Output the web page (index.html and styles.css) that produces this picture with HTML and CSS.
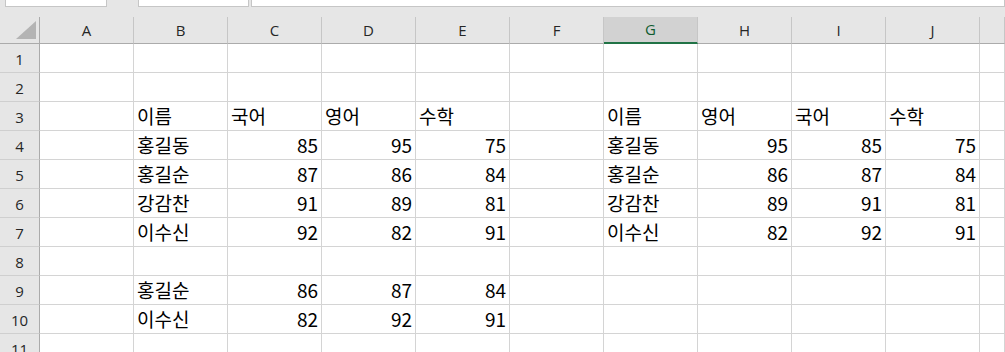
FILE: index.html
```html
<!DOCTYPE html>
<html>
<head>
    <meta charset="utf-8">
    <title>Sheet1</title>
    <link rel="stylesheet" href="styles.css">
</head>
<body>
    <div class="toolbar">
        <div class="box name-box"></div>
        <div class="box func-box"></div>
        <div class="box formula-box"></div>
    </div>

    <div id="sheet" class="sheet">
        <div class="corner">
            <svg width="20" height="18" viewBox="0 0 20 18"><polygon points="0,18 20,18 20,0" fill="#b4b4b4"/></svg>
        </div>
    </div>

    <script>
        const cols = ['A', 'B', 'C', 'D', 'E', 'F', 'G', 'H', 'I', 'J', ''];
        const selectedCol = 'G';

        // row number -> { column: value }
        const data = {
            3: { B: '이름', C: '국어', D: '영어', E: '수학', G: '이름', H: '영어', I: '국어', J: '수학' },
            4: { B: '홍길동', C: 85, D: 95, E: 75, G: '홍길동', H: 95, I: 85, J: 75 },
            5: { B: '홍길순', C: 87, D: 86, E: 84, G: '홍길순', H: 86, I: 87, J: 84 },
            6: { B: '강감찬', C: 91, D: 89, E: 81, G: '강감찬', H: 89, I: 91, J: 81 },
            7: { B: '이수신', C: 92, D: 82, E: 91, G: '이수신', H: 82, I: 92, J: 91 },
            9: { B: '홍길순', C: 86, D: 87, E: 84 },
            10: { B: '이수신', C: 82, D: 92, E: 91 }
        };

        const sheet = document.getElementById('sheet');

        function addCell(className, text) {
            const el = document.createElement('div');
            el.className = className;
            el.textContent = text;
            sheet.appendChild(el);
        }

        cols.forEach(function (c) {
            addCell(c === selectedCol ? 'col-head selected' : 'col-head', c);
        });

        for (let r = 1; r <= 11; r++) {
            addCell('row-head', r);
            const row = data[r] || {};
            cols.forEach(function (c) {
                const v = row[c];
                if (v === undefined) {
                    addCell('cell', '');
                } else if (typeof v === 'number') {
                    addCell('cell num', v);
                } else {
                    addCell('cell', v);
                }
            });
        }
    </script>
</body>
</html>
```

FILE: styles.css
```css
body {
    margin: 0;
    background-color: #ffffff;
    font-family: 'Noto Sans CJK KR', 'Noto Sans', sans-serif;
    overflow: hidden;
}

.toolbar {
    display: flex;
    height: 17px;
    background-color: #e6e6e6;
}

.box {
    height: 6px;
    background-color: #ffffff;
    border: 1px solid #c6c6c6;
    border-top: none;
}

.name-box {
    width: 100px;
    margin-left: 5px;
}

.func-box {
    width: 109px;
    margin-left: 31px;
}

.formula-box {
    flex: 1;
    margin-left: 2px;
}

.sheet {
    display: grid;
    grid-template-columns: 40px repeat(10, 94px) 1fr;
    grid-template-rows: 27px repeat(11, 29px);
}

.sheet > div {
    box-sizing: border-box;
}

.corner {
    background-color: #e6e6e6;
    border-right: 1px solid #ababab;
    border-bottom: 1px solid #ababab;
    display: flex;
    align-items: flex-end;
    justify-content: flex-end;
    padding: 0 3px 4px 0;
}

.corner svg {
    display: block;
}

.col-head {
    background-color: #e6e6e6;
    border-right: 1px solid #c6c6c6;
    border-bottom: 1px solid #ababab;
    color: #262626;
    font-family: 'Open Sans', sans-serif;
    font-size: 15px;
    line-height: 26px;
    text-align: center;
}

.col-head.selected {
    background-color: #d2d2d2;
    border-bottom: 2px solid #217346;
    color: #0f5c30;
    line-height: 25px;
}

.row-head {
    background-color: #e6e6e6;
    border-right: 1px solid #ababab;
    border-bottom: 1px solid #cfcfcf;
    color: #262626;
    font-family: 'Open Sans', sans-serif;
    font-size: 15px;
    line-height: 30px;
    text-align: center;
}

.cell {
    border-right: 1px solid #d4d4d4;
    border-bottom: 1px solid #d4d4d4;
    padding: 0 3px;
    color: #000000;
    font-size: 19px;
    line-height: 28px;
    white-space: nowrap;
    overflow: visible;
}

.num {
    text-align: right;
}
```
